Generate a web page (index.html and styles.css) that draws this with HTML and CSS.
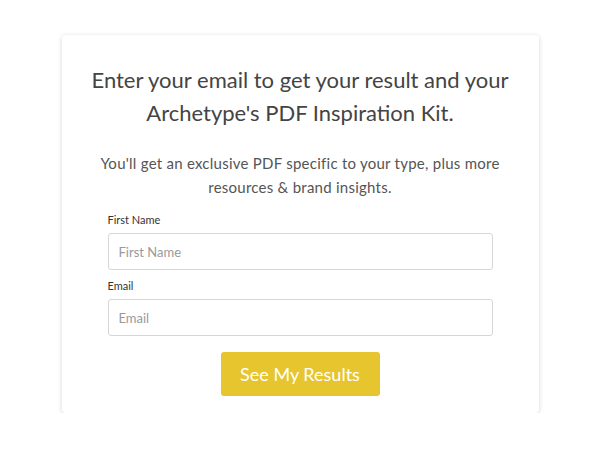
FILE: index.html
```html
<!DOCTYPE html>
<html lang="en">
	<head>
		<meta charset="UTF-8" />
		<meta name="viewport" content="width=device-width, initial-scale=1.0" />
		<title>Archetype Results</title>
		<link rel="stylesheet" href="styles.css">
	</head>

	<body>
		<div class="card">
			<h2 class="card__title">Enter your email to get your result and your Archetype's PDF Inspiration Kit.</h2>
			<p class="card__text">You'll get an exclusive PDF specific to your type, plus more resources &amp; brand insights.</p>

			<form class="form">
				<label class="form__label" for="first-name">First Name</label>
				<input class="form__input" id="first-name" type="text" placeholder="First Name" />

				<label class="form__label" for="email">Email</label>
				<input class="form__input" id="email" type="email" placeholder="Email" />

				<button class="form__button" type="button">See My Results</button>
			</form>
		</div>
	</body>
</html>
```

FILE: styles.css
```css
body {
	margin: 0;
	background-color: #fff;
	font-family: Lato, "Open Sans", sans-serif;
	color: #444;
}
.card {
	box-sizing: border-box;
	width: 477px;
	margin: 35px auto 0;
	padding: 28px 20px 17px;
	background: #fff;
	border-radius: 4px;
	box-shadow: 0 1px 5px rgba(0, 0, 0, 0.16);
	text-align: center;
}
.card__title {
	margin: 0;
	font-size: 22px;
	font-weight: 400;
	line-height: 33px;
	color: #444;
}
.card__text {
	margin: 22px 0 0;
	font-size: 15px;
	letter-spacing: 0.25px;
	line-height: 24px;
	color: #555;
}
.form {
	display: flex;
	flex-direction: column;
	margin: 14px 26px 0;
	text-align: left;
}
.form__label {
	font-size: 11px;
	line-height: 14px;
	color: #333;
	margin-bottom: 6px;
}
.form__input {
	box-sizing: border-box;
	height: 37px;
	margin-bottom: 9px;
	padding: 0 10px;
	border: 1px solid #d6d6d6;
	border-radius: 3px;
	font: inherit;
	font-size: 13px;
	color: #333;
}
.form__input::placeholder {
	color: #999;
}
.form__button {
	align-self: center;
	width: 159px;
	height: 44px;
	margin-top: 7px;
	border: 0;
	border-radius: 3px;
	background-color: #e6c52e;
	color: #fff;
	font: inherit;
	font-size: 18px;
	cursor: pointer;
}
```
